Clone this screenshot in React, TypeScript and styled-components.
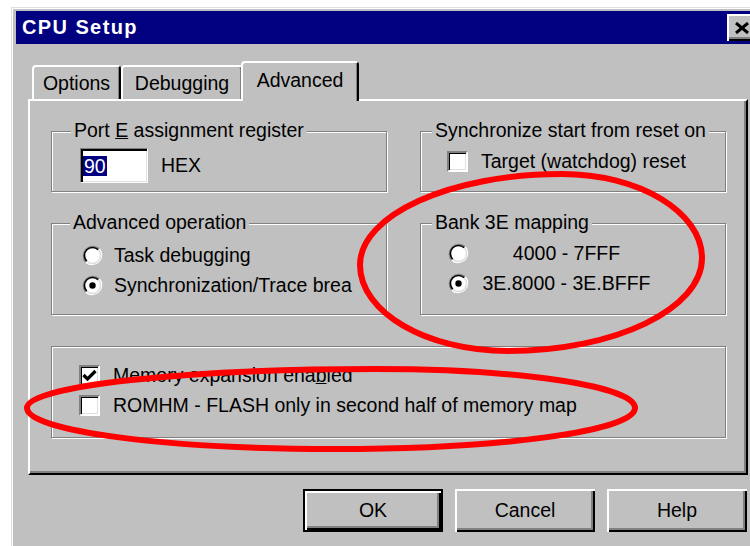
import styled, { createGlobalStyle } from "styled-components";

const GlobalStyle = createGlobalStyle`
  html, body {
    margin: 0;
    padding: 0;
    background: #fff;
  }
  body {
    font-family: "Liberation Sans", Arial, sans-serif;
  }
  * {
    box-sizing: border-box;
  }
`;

const Screen = styled.div`
  position: relative;
  width: 750px;
  height: 546px;
  overflow: hidden;
  padding: 7px 0 0 11px;
  background: #fff;
`;

const Window = styled.div`
  width: 760px;
  height: 560px;
  background: #c0c0c0;
  border-top: 1px solid #dfdfdf;
  border-left: 1px solid #dfdfdf;
  box-shadow: inset 1px 1px 0 #fff;
  padding: 3px 0 0 4px;
  font-size: 19.5px;
  color: #000;
`;

const TitleBar = styled.div`
  display: flex;
  align-items: center;
  width: 739px;
  height: 33px;
  padding-left: 6px;
  background: #000080;
  color: #fff;
  font-weight: bold;
  font-size: 20px;
  letter-spacing: 1.4px;
`;

const CloseButton = styled.div`
  margin-left: auto;
  width: 28px;
  height: 27px;
  display: flex;
  align-items: center;
  justify-content: center;
  padding-left: 2px;
  background: #c0c0c0;
  box-shadow: inset 2px 2px 0 #fff, inset -2px -2px 0 #000, inset -4px -4px 0 #808080;
`;

const Body = styled.div`
  padding: 17px 0 0 12px;
`;

const TabStrip = styled.div`
  display: flex;
  align-items: flex-end;
  height: 38px;
  padding-left: 4px;
`;

const Tab = styled.div<{ $active?: boolean; $w: number }>`
  position: relative;
  z-index: ${(p) => (p.$active ? 1 : 0)};
  width: ${(p) => p.$w}px;
  height: ${(p) => (p.$active ? 40 : 34)}px;
  margin-left: ${(p) => (p.$active ? -2 : 0)}px;
  margin-bottom: ${(p) => (p.$active ? -2 : 0)}px;
  padding-bottom: ${(p) => (p.$active ? 3 : 0)}px;
  display: flex;
  align-items: center;
  justify-content: center;
  background: #c0c0c0;
  border-top: 2px solid #fff;
  border-left: 2px solid #fff;
  border-right: 2px solid #000;
  border-radius: 4px 4px 0 0;
  box-shadow: inset -1px 0 0 #808080;
`;

const Panel = styled.div`
  width: 720px;
  height: 376px;
  padding: 30px 0 0 21px;
  border-top: 2px solid #fff;
  border-left: 2px solid #fff;
  border-right: 2px solid #000;
  border-bottom: 2px solid #000;
  box-shadow: inset -2px -2px 0 #808080;
`;

const GroupGrid = styled.div`
  display: grid;
  grid-template-columns: 336px 306px;
  grid-template-rows: 61px 92px 92px;
  column-gap: 33px;
  row-gap: 31px;
`;

const Group = styled.div<{ $span?: boolean }>`
  display: flex;
  flex-direction: column;
  grid-column: ${(p) => (p.$span ? "1 / span 2" : "auto")};
  border: 1px solid #808080;
  box-shadow: inset 1px 1px 0 #fff, 1px 1px 0 #fff;
`;

const Legend = styled.span<{ $indent: number }>`
  align-self: flex-start;
  height: 22px;
  line-height: 22px;
  margin: -13px 0 0 ${(p) => p.$indent}px;
  padding: 0 3px;
  background: #c0c0c0;
  white-space: nowrap;
`;

const Key = styled.span`
  text-decoration: underline;
`;

const Controls = styled.div<{ $top: number; $left: number }>`
  display: flex;
  flex-direction: column;
  margin: ${(p) => p.$top}px 0 0 ${(p) => p.$left}px;
`;

const Row = styled.div<{ $gap?: number }>`
  display: flex;
  align-items: center;
  height: 30px;
  gap: ${(p) => p.$gap ?? 12}px;
  white-space: nowrap;
`;

const FieldRow = styled.div`
  display: flex;
  align-items: center;
  gap: 13px;
`;

const HexInput = styled.div`
  width: 68px;
  height: 35px;
  display: flex;
  align-items: center;
  padding-left: 2px;
  background: #fff;
  border-top: 1px solid #808080;
  border-left: 1px solid #808080;
  border-bottom: 1px solid #fff;
  border-right: 1px solid #fff;
  box-shadow: inset 2px 2px 0 #000, inset -1px -1px 0 #dfdfdf;
`;

const Selection = styled.span`
  background: #000080;
  color: #fff;
  line-height: 20px;
  padding: 0 1px;
`;

const Caption = styled.span<{ $width?: number; $center?: boolean }>`
  display: block;
  white-space: nowrap;
  width: ${(p) => (p.$width ? `${p.$width}px` : "auto")};
  text-align: ${(p) => (p.$center ? "center" : "left")};
`;

const Box = styled.span`
  flex: none;
  width: 21px;
  height: 21px;
  display: flex;
  align-items: center;
  justify-content: center;
  background: #fff;
  border-top: 2px solid #808080;
  border-left: 2px solid #808080;
  border-bottom: 2px solid #fff;
  border-right: 2px solid #fff;
  box-shadow: inset 1px 1px 0 #000, inset -1px -1px 0 #dfdfdf;
`;

const RadioMark = styled.svg`
  flex: none;
  display: block;
`;

const ButtonRow = styled.div`
  display: flex;
  justify-content: flex-end;
  gap: 12px;
  width: 720px;
  padding-right: 1px;
  margin-top: 14px;
`;

const Button = styled.button<{ $default?: boolean }>`
  width: 140px;
  height: 43px;
  padding: 0;
  background: #c0c0c0;
  color: #000;
  font-family: "Liberation Sans", Arial, sans-serif;
  font-size: 19.5px;
  border: ${(p) => (p.$default ? "2px solid #000" : "none")};
  box-shadow: inset 2px 2px 0 #fff, inset -2px -2px 0 #000, inset -4px -4px 0 #808080;
`;

const Markup = styled.svg`
  position: absolute;
  left: 0;
  top: 0;
  pointer-events: none;
`;

function Radio({ checked }: { checked?: boolean }) {
  return (
    <RadioMark viewBox="0 0 21 21" width={21} height={21}>
      <circle cx="10.5" cy="10.5" r="8" fill="#fff" />
      <path d="M3.8 17.2A9.5 9.5 0 0 1 17.2 3.8" stroke="#808080" strokeWidth="1.6" fill="none" />
      <path d="M17.2 3.8A9.5 9.5 0 0 1 3.8 17.2" stroke="#fff" strokeWidth="1.6" fill="none" />
      <path d="M4.8 16.2A8 8 0 0 1 16.2 4.8" stroke="#000" strokeWidth="1.6" fill="none" />
      <path d="M16.2 4.8A8 8 0 0 1 4.8 16.2" stroke="#dfdfdf" strokeWidth="1.6" fill="none" />
      {checked && <circle cx="10.5" cy="10.5" r="3.2" fill="#000" />}
    </RadioMark>
  );
}

function Check({ checked }: { checked?: boolean }) {
  return (
    <Box>
      {checked && (
        <svg viewBox="0 0 15 13" width={15} height={13}>
          <polyline points="1.5,6 5.5,10 13.5,2" stroke="#000" strokeWidth="3.2" fill="none" />
        </svg>
      )}
    </Box>
  );
}

export default function App() {
  return (
    <>
      <GlobalStyle />
      <Screen>
        <Window>
          <TitleBar>
            CPU Setup
            <CloseButton>
              <svg viewBox="0 0 16 12" width={16} height={12}>
                <path d="M2 1L14 11M14 1L2 11" stroke="#000" strokeWidth="3" />
              </svg>
            </CloseButton>
          </TitleBar>

          <Body>
            <TabStrip>
              <Tab $w={89}>Options</Tab>
              <Tab $w={122}>Debugging</Tab>
              <Tab $w={118} $active>
                Advanced
              </Tab>
            </TabStrip>

            <Panel>
              <GroupGrid>
                <Group>
                  <Legend $indent={19}>
                    Port <Key>E</Key> assignment register
                  </Legend>
                  <Controls $top={7} $left={28}>
                    <FieldRow>
                      <HexInput>
                        <Selection>90</Selection>
                      </HexInput>
                      HEX
                    </FieldRow>
                  </Controls>
                </Group>

                <Group>
                  <Legend $indent={11}>Synchronize start from reset on</Legend>
                  <Controls $top={5} $left={26}>
                    <Row $gap={13}>
                      <Check />
                      Target (watchdog) reset
                    </Row>
                  </Controls>
                </Group>

                <Group>
                  <Legend $indent={18}>Advanced operation</Legend>
                  <Controls $top={7} $left={30}>
                    <Row $gap={11}>
                      <Radio />
                      Task debugging
                    </Row>
                    <Row $gap={11}>
                      <Radio checked />
                      <Caption>Synchronization/Trace brea</Caption>
                    </Row>
                  </Controls>
                </Group>

                <Group>
                  <Legend $indent={11}>Bank 3E mapping</Legend>
                  <Controls $top={5} $left={27}>
                    <Row $gap={13}>
                      <Radio />
                      <Caption $width={169} $center>
                        4000 - 7FFF
                      </Caption>
                    </Row>
                    <Row $gap={13}>
                      <Radio checked />
                      <Caption $width={169} $center>
                        3E.8000 - 3E.BFFF
                      </Caption>
                    </Row>
                  </Controls>
                </Group>

                <Group $span>
                  <Controls $top={13} $left={27}>
                    <Row $gap={13}>
                      <Check checked />
                      <span>
                        Memory expansion ena<Key>b</Key>led
                      </span>
                    </Row>
                    <Row $gap={13}>
                      <Check />
                      ROMHM - FLASH only in second half of memory map
                    </Row>
                  </Controls>
                </Group>
              </GroupGrid>
            </Panel>

            <ButtonRow>
              <Button $default>OK</Button>
              <Button>Cancel</Button>
              <Button>Help</Button>
            </ButtonRow>
          </Body>
        </Window>

        {/* red marker rings drawn over the dialog */}
        <Markup width={750} height={546} viewBox="0 0 750 546">
          <path
            d="M562 174C639 174 702 212 702 258C702 309 615 351 508 351C426 351 360 312 360 265C360 215 450 174 562 174Z"
            stroke="#ff0000"
            strokeWidth="6"
            fill="none"
          />
          <path
            d="M375 369C519 369 635 386 635 408C635 431 501 449 335 449C165 449 27 431 27 408C27 386 183 369 375 369Z"
            stroke="#ff0000"
            strokeWidth="6"
            fill="none"
          />
        </Markup>
      </Screen>
    </>
  );
}
